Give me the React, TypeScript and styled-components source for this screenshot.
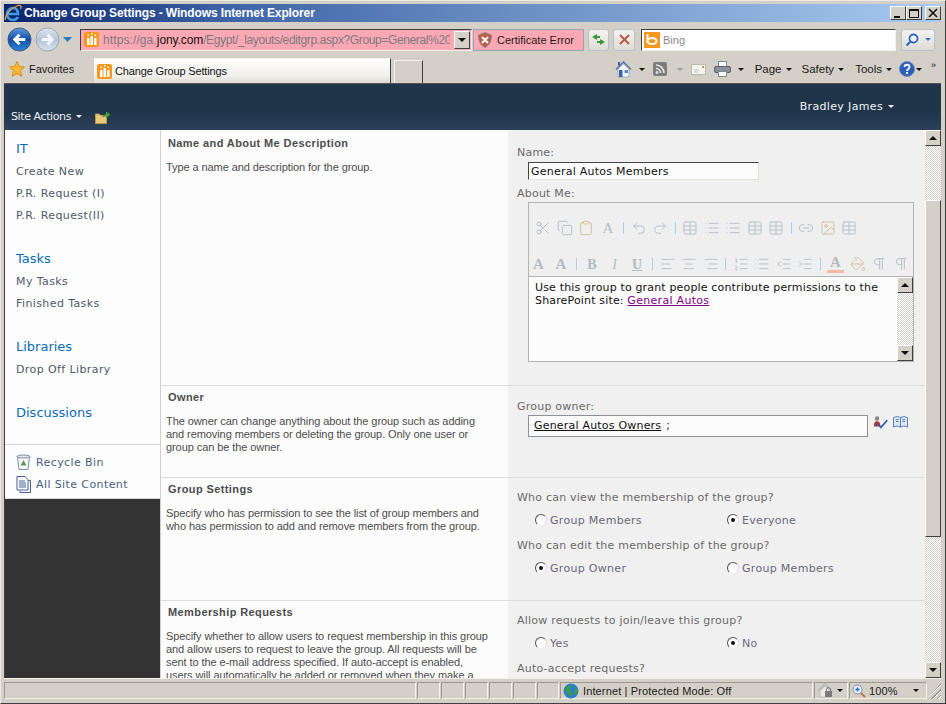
import styled, { createGlobalStyle } from 'styled-components'
import {
  Scissors, Copy, Clipboard, Undo2, Redo2, Table, Link2, Image, AlignLeft, AlignCenter, AlignRight,
  ListOrdered, List, Outdent, Indent, PaintBucket, Pilcrow,
} from 'lucide-react'

const GlobalStyle = createGlobalStyle`
  html, body { margin: 0; padding: 0; background: #d4d0c8; }
  body { font-family: "Liberation Sans", Arial, sans-serif; }
  * { box-sizing: border-box; }
`

const chromeFont = '"Liberation Sans", Arial, sans-serif'
const pageFont = '"DejaVu Sans", Verdana, sans-serif'

const Window = styled.div`
  width: 946px;
  height: 704px;
  padding: 3px 4px 2px 3px;
  display: flex;
  flex-direction: column;
  overflow: hidden;
  background: #d4d0c8;
  border-top: 1px solid #ece9e2;
  border-left: 1px solid #ece9e2;
  border-right: 1px solid #404040;
  border-bottom: 1px solid #404040;
`

const TitleBar = styled.div`
  height: 18px;
  flex: none;
  display: flex;
  align-items: center;
  gap: 2px;
  background: linear-gradient(90deg, #0a246a 0%, #3f66a8 25%, #6c8fc4 55%, #a6caf0 100%);
`

const TitleText = styled.span`
  flex: 1;
  color: #fff;
  font: bold 12px ${chromeFont};
  letter-spacing: -0.12px;
  white-space: nowrap;
`

const WinButtons = styled.div`
  display: flex;
  gap: 0;
`

const WinButton = styled.button<{ $gap?: number }>`
  width: 16px;
  height: 14px;
  padding: 0;
  margin-left: ${p => p.$gap ?? 0}px;
  display: flex;
  align-items: center;
  justify-content: center;
  background: #d4d0c8;
  border: 1px solid;
  border-color: #fff #404040 #404040 #fff;
`

const AddressRow = styled.div`
  height: 34px;
  flex: none;
  display: flex;
  align-items: center;
  padding: 1px 0 0 3px;
`

const NavGroup = styled.div`
  width: 73px;
  flex: none;
  display: flex;
  align-items: center;
  gap: 3px;
`

const AddressBox = styled.div`
  width: 392px;
  height: 22px;
  flex: none;
  display: flex;
  align-items: center;
  gap: 4px;
  padding-left: 3px;
  background: #ffa8b4;
  border: 1px solid;
  border-color: #404040 #f4f1ea #f4f1ea #404040;
  font: 12px ${chromeFont};
  overflow: hidden;
`

const Url = styled.span`
  flex: 1;
  width: 349px;
  overflow: hidden;
  white-space: nowrap;
  color: #7a7a80;
  letter-spacing: -0.37px;
  b { font-weight: normal; color: #111; letter-spacing: -0.1px; }
`

const UrlScheme = styled.span`
  letter-spacing: 0.1px;
`

const ComboButton = styled.span`
  width: 16px;
  height: 18px;
  margin-right: 1px;
  flex: none;
  display: flex;
  align-items: center;
  justify-content: center;
  background: #d4d0c8;
  border: 1px solid;
  border-color: #fff #404040 #404040 #fff;
`

const CertBox = styled.div`
  width: 111px;
  height: 22px;
  flex: none;
  margin-left: 1px;
  display: flex;
  align-items: center;
  gap: 5px;
  padding-left: 4px;
  background: #ffa8b4;
  border: 1px solid #9aa6b4;
  font: 11px ${chromeFont};
  color: #1a1a1a;
`

const RoundButton = styled.span<{ $gap?: number; $w?: number }>`
  width: ${p => p.$w ?? 21}px;
  height: 22px;
  flex: none;
  margin-left: ${p => p.$gap ?? 4}px;
  display: flex;
  align-items: center;
  justify-content: center;
  border: 1px solid #b9c0c8;
  border-radius: 3px;
  background: linear-gradient(#f4f3f0, #dfdcd6);
`

const SearchBox = styled.div`
  width: 255px;
  height: 22px;
  flex: none;
  margin-left: 6px;
  display: flex;
  align-items: center;
  gap: 3px;
  padding-left: 2px;
  background: #fff;
  border: 1px solid;
  border-color: #404040 #f4f1ea #f4f1ea #404040;
  font: 11px ${chromeFont};
  color: #8a8a8a;
`

const FavRow = styled.div`
  height: 27px;
  flex: none;
  display: flex;
  align-items: flex-end;
  padding-left: 5px;
`

const Favorites = styled.div`
  width: 85px;
  height: 27px;
  flex: none;
  display: flex;
  align-items: center;
  gap: 4px;
  padding-bottom: 1px;
  font: 11px ${chromeFont};
  color: #1a1a1a;
`

const ActiveTab = styled.div`
  width: 297px;
  height: 25px;
  flex: none;
  display: flex;
  align-items: center;
  gap: 3px;
  padding-left: 3px;
  background: linear-gradient(#fff, #f1efe9 70%, #dedbd3);
  border-right: 1px solid #404040;
  border-top: 1px solid #f2f0ea;
  font: 11px ${chromeFont};
  letter-spacing: -0.15px;
  color: #111;
`

const NewTab = styled.div`
  width: 29px;
  height: 23px;
  flex: none;
  margin-left: 3px;
  border-top: 1px solid #f4f1ea;
  border-left: 1px solid #f4f1ea;
  border-right: 1px solid #404040;
`

const CommandBar = styled.div`
  flex: 1;
  height: 27px;
  display: flex;
  align-items: center;
  justify-content: flex-end;
  padding: 0 5px 1px 0;
  font: 11.5px ${chromeFont};
  color: #1a1a1a;
`

const Command = styled.span<{ $gap?: number; $inner?: number }>`
  display: flex;
  align-items: center;
  gap: ${p => p.$inner ?? 4}px;
  margin-left: ${p => p.$gap ?? 12}px;
`

const Chevrons = styled.span`
  font-size: 9px;
  margin-top: -8px;
`

const Caret = styled.span<{ $color?: string }>`
  display: inline-block;
  width: 0;
  height: 0;
  border-left: 3px solid transparent;
  border-right: 3px solid transparent;
  border-top: 3px solid ${p => p.$color ?? '#111'};
`

const SiteHeader = styled.div`
  height: 47px;
  flex: none;
  display: flex;
  justify-content: space-between;
  padding: 15px 47px 0 7px;
  border-top: 1px solid #555;
  background: linear-gradient(#20344a 60%, #2c425a);
  color: #eef1f4;
  font: 11px ${pageFont};
`

const HeaderLeft = styled.div`
  display: flex;
  align-items: center;
  gap: 13px;
  margin-top: 8px;
  height: 18px;
`

const SiteActions = styled.span`
  display: flex;
  align-items: center;
  gap: 5px;
  letter-spacing: -0.4px;
`

const HeaderUser = styled.div`
  display: flex;
  align-items: center;
  gap: 5px;
  height: 14px;
  letter-spacing: 0.35px;
`

const Body = styled.div`
  height: 548px;
  flex: none;
  display: flex;
  overflow: hidden;
  border-left: 1px solid #404040;
`

const Nav = styled.nav`
  width: 156px;
  flex: none;
  display: flex;
  flex-direction: column;
  background: #333;
  border-right: 1px solid #d0d0d0;
`

const NavTop = styled.div`
  background: #fdfdfd;
  padding: 8px 11px 0;
  height: 315px;
  border-bottom: 1px solid #d8d8d8;
`

const NavHeading = styled.div<{ $mt?: number }>`
  margin-top: ${p => p.$mt ?? 0}px;
  margin-bottom: 1px;
  height: 22px;
  font: 13px/22px ${pageFont};
  color: #0a6cb4;
`

const NavItem = styled.div`
  height: 22px;
  font: 11px/22px ${pageFont};
  letter-spacing: 0.4px;
  color: #4f5a68;
  white-space: nowrap;
`

const NavBottom = styled.div`
  background: #fdfdfd;
  padding: 6px 11px 4px;
  height: 54px;
  border-bottom: 1px solid #d8d8d8;
`

const SideLink = styled.div`
  height: 22px;
  display: flex;
  align-items: center;
  gap: 5px;
  font: 11px ${pageFont};
  letter-spacing: 0.4px;
  color: #4a5f80;
`

const Main = styled.main`
  flex: 1;
  min-width: 0;
  overflow: hidden;
`

const Section = styled.section<{ $h: number }>`
  height: ${p => p.$h}px;
  display: flex;
  border-bottom: 1px solid #dcdcdc;
`

const Describe = styled.div<{ $pt?: number }>`
  width: 347px;
  flex: none;
  padding: ${p => p.$pt ?? 4}px 16px 0 5px;
  background: #fcfcfc;
`

const SectionTitle = styled.h3`
  margin: 0 0 11px 2px;
  font: bold 11px/14px ${chromeFont};
  color: #4c4c4c;
  letter-spacing: 0.4px;
`

const SectionText = styled.p`
  margin: 0;
  font: 11px/13px ${chromeFont};
  letter-spacing: -0.08px;
  color: #4c4c4c;
`

const Fields = styled.div<{ $pt?: number }>`
  flex: 1;
  padding: ${p => p.$pt ?? 13}px 9px 0;
  background: #f0f0f0;
`

const FieldLabel = styled.div<{ $mt?: number }>`
  margin-top: ${p => p.$mt ?? 0}px;
  font: 11px/14px ${pageFont};
  letter-spacing: 0.22px;
  color: #6a6a6a;
`

const NameInput = styled.div`
  width: 231px;
  height: 18px;
  margin: 2px 0 0 11px;
  padding-left: 2px;
  background: #fcfcfc;
  border: 1px solid;
  border-color: #444 #e6e2da #e6e2da #444;
  font: 11px/17px ${pageFont};
  letter-spacing: 0.24px;
  color: #111;
`

const Editor = styled.div`
  width: 386px;
  height: 160px;
  margin: 1px 0 0 11px;
  display: flex;
  flex-direction: column;
  border: 1px solid #b4b4b4;
`

const EditorTools = styled.div`
  height: 74px;
  flex: none;
  padding-top: 13px;
  background: #efefef;
  border-bottom: 1px solid #b4b4b4;
`

const ToolRow = styled.div<{ $pl?: number }>`
  height: 24px;
  margin-bottom: 12px;
  padding-left: ${p => p.$pl ?? 6}px;
  display: flex;
  align-items: center;
  gap: 5.500px;
`

const ToolGlyph = styled.span<{ $bold?: boolean; $italic?: boolean; $under?: boolean; $size?: number; $accent?: boolean }>`
  width: 17px;
  text-align: center;
  font: ${p => (p.$italic ? 'italic ' : '')}${p => (p.$bold ? 'bold ' : '')}${p => p.$size ?? 14}px/15px "Liberation Serif", serif;
  text-decoration: ${p => (p.$under ? 'underline' : 'none')};
  color: #b4bac0;
  ${p => (p.$accent ? 'border-bottom: 3px solid #f6b8a0;' : '')}
`

const ToolSep = styled.span`
  width: 1px;
  height: 12px;
  margin: 0 1px;
  flex: none;
  background: #a9cdeb;
`

const EditorBody = styled.div`
  flex: 1;
  display: flex;
  background: #fcfcfc;
`

const EditorText = styled.div`
  flex: 1;
  padding: 4px 6px;
  font: 11px/13px ${pageFont};
  letter-spacing: 0.16px;
  color: #111;
  a { color: #800080; text-decoration: underline; letter-spacing: 0.3px; }
`

const MiniBar = styled.div`
  width: 16px;
  flex: none;
  display: flex;
  flex-direction: column;
  justify-content: space-between;
  background: repeating-conic-gradient(#d4d0c8 0 25%, #fff 0 50%) 0 0 / 2px 2px;
`

const ScrollBtn = styled.div<{ $end?: boolean }>`
  width: 16px;
  height: 16px;
  flex: none;
  ${p => (p.$end ? 'margin-top: auto;' : '')}
  display: flex;
  align-items: center;
  justify-content: center;
  background: #d4d0c8;
  border: 1px solid;
  border-color: #fff #404040 #404040 #fff;
`

const Arrow = styled.span<{ $up?: boolean }>`
  width: 0;
  height: 0;
  border-left: 4px solid transparent;
  border-right: 4px solid transparent;
  ${p => (p.$up ? 'border-bottom: 4px solid #111;' : 'border-top: 4px solid #111;')}
`

const OwnerRow = styled.div`
  display: flex;
  align-items: flex-start;
  gap: 4px;
  margin: 1px 0 0 11px;
`

const OwnerInput = styled.div`
  width: 340px;
  height: 22px;
  padding-left: 5px;
  background: #fcfcfc;
  border: 1px solid #8c9198;
  font: 11px/20px ${pageFont};
  letter-spacing: 0.2px;
  color: #111;
  margin-right: 1px;
  u { margin-right: 5px; }
`

const RadioRow = styled.div`
  display: flex;
  margin: 9px 0 11px 18px;
`

const RadioItem = styled.label`
  width: 192px;
  display: flex;
  align-items: center;
  gap: 3px;
  font: 11px/14px ${pageFont};
  letter-spacing: 0.3px;
  color: #6a6a7a;
`

const RadioDot = styled.span<{ $on?: boolean }>`
  width: 12px;
  height: 12px;
  flex: none;
  margin-top: -2px;
  display: flex;
  align-items: center;
  justify-content: center;
  background: #fcfcfc;
  border-radius: 50%;
  border: 1px solid;
  border-color: #555 #ddd #eee #555;
  &::after {
    content: '';
    width: 4px;
    height: 4px;
    border-radius: 50%;
    background: ${p => (p.$on ? '#111' : 'transparent')};
  }
`

const Scrollbar = styled.div`
  width: 16px;
  flex: none;
  display: flex;
  flex-direction: column;
  background: repeating-conic-gradient(#d4d0c8 0 25%, #fff 0 50%) 0 0 / 2px 2px;
`

const Thumb = styled.div`
  height: 337px;
  flex: none;
  margin-top: 54px;
  background: #d4d0c8;
  border: 1px solid;
  border-color: #fff #404040 #404040 #fff;
`

const StatusBar = styled.div`
  height: 23px;
  flex: none;
  display: flex;
  align-items: stretch;
  padding: 3px 0 2px;
  border-top: 1px solid #f4f1ea;
  font: 11px ${chromeFont};
  letter-spacing: 0.13px;
  color: #1a1a1a;
`

const StatusCell = styled.div<{ $w?: number; $grow?: boolean; $gap?: number }>`
  ${p => (p.$grow ? 'flex: 1;' : `width: ${p.$w}px; flex: none;`)}
  display: flex;
  align-items: center;
  gap: ${p => p.$gap ?? 4}px;
  padding-left: 2px;
  margin-right: 1px;
  border: 1px solid;
  border-color: #9c9890 #f4f1ea #f4f1ea #9c9890;
`

const ZoomCaret = styled(Caret)`
  margin-left: 12px;
`

const Grip = styled.span`
  width: 13px;
  flex: none;
  background: repeating-linear-gradient(135deg, transparent 0 2px, #9c9890 2px 3px, #fff 3px 4px);
  clip-path: polygon(100% 0, 100% 100%, 0 100%);
`

const IeLogo = () => (
  <svg width="18" height="18" viewBox="0 0 18 18" fill="none">
    <path d="M4.500 10h9.500c.3-3.500-2-6-5-6S3 6.500 3 10s2.500 6 5.800 6c2.400 0 4.200-1.100 5-3" stroke="#3f9be6" strokeWidth="2.600" />
    <path d="M1.500 16C.2 12 6 4.500 14 1.500c2.800-.8 3.600.8 2.600 3.500" stroke="#f0a030" strokeWidth="1.300" />
  </svg>
)

const SiteIcon = () => (
  <svg width="15" height="15" viewBox="0 0 15 15">
    <rect width="15" height="15" rx="2" fill="#f7981d" />
    <rect x="3" y="6" width="2.500" height="7" fill="#fff" />
    <rect x="6.500" y="4" width="2.500" height="9" fill="#fff" />
    <rect x="10" y="6" width="2.500" height="7" fill="#fff" />
    <rect x="3.500" y="2.500" width="1.500" height="1.500" fill="#fff" />
    <rect x="7" y="1" width="1.500" height="1.500" fill="#fff" />
    <rect x="10.500" y="2.500" width="1.500" height="1.500" fill="#fff" />
  </svg>
)

const BackIcon = ({ dim }: { dim?: boolean }) => (
  <svg width="25" height="25" viewBox="0 0 26 26">
    <defs>
      <linearGradient id={dim ? 'fwd' : 'bck'} x1="0" y1="0" x2="0" y2="1">
        <stop offset="0" stopColor={dim ? '#dfe8f2' : '#5c9be0'} />
        <stop offset="0.5" stopColor={dim ? '#b4c4d8' : '#0f4ea8'} />
        <stop offset="1" stopColor={dim ? '#d8e2ee' : '#2e86dc'} />
      </linearGradient>
    </defs>
    <circle cx="13" cy="13" r="12" fill={`url(#${dim ? 'fwd' : 'bck'})`} stroke={dim ? '#9aa4ae' : '#4a5a70'} />
    {dim ? (
      <path d="M7 13h11M13 8l5 5-5 5" fill="none" stroke="#f4f7fb" strokeWidth="3" />
    ) : (
      <path d="M19 13H8M13 8l-5 5 5 5" fill="none" stroke="#fff" strokeWidth="3" />
    )}
  </svg>
)

const GlobeIcon = () => (
  <svg width="16" height="16" viewBox="0 0 16 16">
    <circle cx="8" cy="8" r="7.500" fill="#2c7fd0" />
    <path d="M3 4c2-1 4-2 6-1 0 2-2 2-2 4s2 2 2 4l-2 3C5 13 5 10 3 9 2 7 2 5 3 4zM11 6l3 0 1 3-2 3-2-2z" fill="#3f9a4a" />
  </svg>
)

const HomeIcon = () => (
  <svg width="17" height="17" viewBox="0 0 17 17">
    <path d="M1 8.500 8.500 1l7.500 7.500" fill="none" stroke="#5878a8" strokeWidth="1.500" />
    <path d="M3 8l5.500-5L14 8v8H3z" fill="#f4f6fa" stroke="#8096b8" strokeWidth=".7" />
    <rect x="4" y="9" width="3.500" height="7" fill="#3a62a8" />
    <rect x="9.500" y="9" width="3.500" height="3" fill="#5a88d0" />
    <rect x="3" y="1" width="2" height="3.500" fill="#3a62a8" />
  </svg>
)

const LockedHome = () => (
  <svg width="17" height="15" viewBox="0 0 17 15">
    <path d="M1 8 8 1l7 7" fill="none" stroke="#b8b8b8" strokeWidth="1.500" />
    <path d="M3 8l5-5 5 5v6H3z" fill="#ecebe8" stroke="#b0b0b0" strokeWidth=".7" />
    <rect x="8" y="8" width="7" height="6" fill="#7c7c7c" />
    <path d="M9.500 8V6.500a2 2 0 0 1 4 0V8" fill="none" stroke="#7c7c7c" />
  </svg>
)

const ZoomIcon = () => (
  <svg width="14" height="14" viewBox="0 0 14 14">
    <circle cx="5.500" cy="5.500" r="4.500" fill="#e4f0fb" stroke="#7a90a8" />
    <path d="M3.500 5.500h4M5.500 3.500v4" stroke="#2a68c0" strokeWidth="1.300" />
    <path d="M9 9l4 4" stroke="#b87848" strokeWidth="2" />
  </svg>
)

const FeedIcon = () => (
  <svg width="14" height="14" viewBox="0 0 14 14">
    <rect width="14" height="14" rx="2" fill="#7d7d7d" />
    <circle cx="4" cy="10.500" r="1.400" fill="#e4e4e4" />
    <path d="M3 6.500a4.500 4.500 0 0 1 4.500 4.500M3 3a8 8 0 0 1 8 8" fill="none" stroke="#e4e4e4" strokeWidth="1.600" />
  </svg>
)

const MailIcon = () => (
  <svg width="15" height="11" viewBox="0 0 15 11">
    <rect x=".5" y=".5" width="14" height="10" fill="#f6f4ef" stroke="#bdb9b0" />
    <path d="M3 6h5M3 8h4" stroke="#c4c0b8" />
    <rect x="11" y="2" width="2" height="2" fill="#e08050" />
  </svg>
)

const PrintIcon = () => (
  <svg width="17" height="16" viewBox="0 0 17 16">
    <rect x="4.500" y=".5" width="8" height="6" fill="#fff" stroke="#808890" />
    <rect x=".5" y="5.500" width="16" height="6" rx="1.500" fill="#8a9098" stroke="#5c6268" />
    <rect x="4.500" y="10.500" width="8" height="5" fill="#fff" stroke="#808890" />
  </svg>
)

const HelpIcon = () => (
  <svg width="16" height="16" viewBox="0 0 16 16">
    <circle cx="8" cy="8" r="7.500" fill="#2a5cc0" stroke="#7b8aa8" />
    <path d="M5.500 6c0-3 5-3 5 0 0 2-2.500 2-2.500 4" fill="none" stroke="#fff" strokeWidth="1.800" />
    <rect x="7" y="11" width="2" height="2" fill="#fff" />
  </svg>
)

const Bing = () => (
  <svg width="16" height="16" viewBox="0 0 16 16">
    <rect width="16" height="16" fill="#f7981d" />
    <path d="M3.500 2v9" stroke="#fff" strokeWidth="2" />
    <ellipse cx="8" cy="9" rx="4.500" ry="3" fill="none" stroke="#fff" strokeWidth="2" />
  </svg>
)

const ShieldIcon = () => (
  <svg width="14" height="16" viewBox="0 0 14 16">
    <path d="M7 .5 13.500 3c0 6-1.500 10-6.500 12.500C2 13 .5 9 .5 3z" fill="#b8604a" stroke="#8a8a8a" />
    <path d="M4 5l6 6M10 5l-6 6" stroke="#fff" strokeWidth="1.800" />
  </svg>
)

const Star = () => (
  <svg width="16" height="16" viewBox="0 0 16 16">
    <path d="M8 .5 10.200 5.500 15.500 6 11.500 9.700 12.800 15.300 8 12.400 3.200 15.300 4.500 9.700.5 6 5.800 5.500z" fill="#f7b733" stroke="#d98a1e" />
  </svg>
)

const FolderUp = () => (
  <svg width="16" height="15" viewBox="0 0 16 15">
    <path d="M.5 5h4l1 1.500h6v8h-11z" fill="#e8c878" stroke="#b89850" />
    <path d="M7 9c1-3 3-4 4-4V2.500L15.500 5.500 11 9V7.500C9.500 7.500 8 8 7 9z" fill="#4a9a3a" />
  </svg>
)

const RecycleIcon = () => (
  <svg width="15" height="16" viewBox="0 0 15 16">
    <path d="M1.500 2.500h12l-1.500 13h-9z" fill="#f4f6fa" stroke="#7f8ea8" />
    <ellipse cx="7.500" cy="2.500" rx="6.500" ry="1.500" fill="#e2e6ee" stroke="#7f8ea8" />
    <path d="M7.500 6 10.500 11.500h-6z" fill="#5f9a5a" />
  </svg>
)

const PagesIcon = () => (
  <svg width="15" height="17" viewBox="0 0 15 17">
    <path d="M1 .5h8l3 3V14H1z" fill="#fff" stroke="#44609a" />
    <path d="M3 5h6M3 7h7M3 9h7M3 11h7" stroke="#44609a" />
    <path d="M12.500 4.500h2V16.500H4v-2" fill="none" stroke="#44609a" />
  </svg>
)

const CheckNames = () => (
  <svg width="16" height="15" viewBox="0 0 18 15">
    <circle cx="4.500" cy="3" r="2.500" fill="#888" />
    <path d="M1 12c0-4 1-6 3.500-6S8 8 8 10v2z" fill="#a33a3a" />
    <path d="M6 9.500 9 13l7-8" fill="none" stroke="#2f5fa8" strokeWidth="2" />
  </svg>
)

const BookIcon = () => (
  <svg width="15" height="13" viewBox="0 0 16 13">
    <path d="M.5 2.500C3 1 6 1 8 2.500 10 1 13 1 15.500 2.500v10C13 11 10 11 8 12.500 6 11 3 11 .5 12.500z" fill="#dfeaf6" stroke="#4a78b0" />
    <path d="M8 2.500v10M3 4.500h3M3 6.500h3M10 4.500h3M10 6.500h3" stroke="#4a78b0" />
  </svg>
)

const tool = { size: 16, strokeWidth: 1.500, color: '#b9c1ca' }
const warmTool = { size: 16, strokeWidth: 1.500, color: '#d2c39c' }

const App = () => (
  <>
    <GlobalStyle />
    <Window>
      <TitleBar>
        <IeLogo />
        <TitleText>Change Group Settings - Windows Internet Explorer</TitleText>
        <WinButtons>
          <WinButton>
            <svg width="10" height="10"><rect x="1" y="8" width="6" height="2" fill="#111" /></svg>
          </WinButton>
          <WinButton>
            <svg width="10" height="10"><path d="M.5 1.500h9v8h-9z" fill="none" stroke="#111" /><rect y="1" width="10" height="2" fill="#111" /></svg>
          </WinButton>
          <WinButton $gap={3}>
            <svg width="10" height="10"><path d="M1 1l8 8M9 1l-8 8" stroke="#111" strokeWidth="1.600" /></svg>
          </WinButton>
        </WinButtons>
      </TitleBar>

      <AddressRow>
        <NavGroup>
          <BackIcon />
          <BackIcon dim />
          <svg width="9" height="6"><path d="M0 0h9L4.500 5z" fill="#2a78c8" /></svg>
        </NavGroup>
        <AddressBox>
          <SiteIcon />
          <Url><UrlScheme>https://ga.</UrlScheme><b>jony.com</b>/Egypt/_layouts/editgrp.aspx?Group=General%20Autos%20Members</Url>
          <ComboButton><Arrow /></ComboButton>
        </AddressBox>
        <CertBox><ShieldIcon />Certificate Error</CertBox>
        <RoundButton>
          <svg width="15" height="13" viewBox="0 0 15 13"><path d="M6 1 1 4l5 3V5h3V3H6zM9 6l5 3-5 3v-2H6V8h3z" fill="#3a9a3a" /></svg>
        </RoundButton>
        <RoundButton $w={22}>
          <svg width="11" height="11"><path d="M1 1l9 9M10 1l-9 9" stroke="#b85a44" strokeWidth="2" /></svg>
        </RoundButton>
        <SearchBox><Bing />Bing</SearchBox>
        <RoundButton $gap={5} $w={34}>
          <svg width="14" height="14" viewBox="0 0 14 14" style={{ marginRight: 6 }}><circle cx="8.500" cy="5.500" r="4" fill="#f4f8fd" stroke="#2a68c0" strokeWidth="1.800" /><path d="M5.500 8.500 1.500 12.500" stroke="#2a68c0" strokeWidth="2.200" /></svg>
          <Caret $color="#2a78c8" />
        </RoundButton>
      </AddressRow>

      <FavRow>
        <Favorites><Star />Favorites</Favorites>
        <ActiveTab><SiteIcon />Change Group Settings</ActiveTab>
        <NewTab />
        <CommandBar>
          <Command $inner={7}><HomeIcon /><Caret /></Command>
          <Command $gap={8} $inner={10}><FeedIcon /><Caret $color="#999" /></Command>
          <Command $gap={8}><MailIcon /></Command>
          <Command $gap={8} $inner={7}><PrintIcon /><Caret /></Command>
          <Command $gap={11}>Page<Caret /></Command>
          <Command $gap={10}>Safety<Caret /></Command>
          <Command $gap={11}>Tools<Caret /></Command>
          <Command $gap={7} $inner={1}><HelpIcon /><Caret /></Command>
          <Command $gap={9}><Chevrons>»</Chevrons></Command>
        </CommandBar>
      </FavRow>

      <SiteHeader>
        <HeaderLeft>
          <SiteActions>Site Actions<Caret $color="#eef1f4" /></SiteActions>
          <FolderUp />
        </HeaderLeft>
        <HeaderUser>Bradley James<Caret $color="#eef1f4" /></HeaderUser>
      </SiteHeader>

      <Body>
        <Nav>
          <NavTop>
            <NavHeading>IT</NavHeading>
            <NavItem>Create New</NavItem>
            <NavItem>P.R. Request (I)</NavItem>
            <NavItem>P.R. Request(II)</NavItem>
            <NavHeading $mt={21}>Tasks</NavHeading>
            <NavItem>My Tasks</NavItem>
            <NavItem>Finished Tasks</NavItem>
            <NavHeading $mt={21}>Libraries</NavHeading>
            <NavItem>Drop Off Library</NavItem>
            <NavHeading $mt={21}>Discussions</NavHeading>
          </NavTop>
          <NavBottom>
            <SideLink><RecycleIcon />Recycle Bin</SideLink>
            <SideLink><PagesIcon />All Site Content</SideLink>
          </NavBottom>
        </Nav>

        <Main>
          <Section $h={256}>
            <Describe $pt={6}>
              <SectionTitle>Name and About Me Description</SectionTitle>
              <SectionText>Type a name and description for the group.</SectionText>
            </Describe>
            <Fields $pt={16}>
              <FieldLabel>Name:</FieldLabel>
              <NameInput>General Autos Members</NameInput>
              <FieldLabel $mt={7}>About Me:</FieldLabel>
              <Editor>
                <EditorTools>
                  <ToolRow>
                    <Scissors {...tool} />
                    <Copy {...tool} />
                    <Clipboard {...warmTool} />
                    <ToolGlyph $size={15}>A</ToolGlyph>
                    <ToolSep />
                    <Undo2 {...tool} />
                    <Redo2 {...tool} />
                    <ToolSep />
                    <Table {...tool} />
                    <List {...tool} />
                    <List {...tool} />
                    <Table {...tool} />
                    <Table {...tool} />
                    <ToolSep />
                    <Link2 {...tool} />
                    <Image {...warmTool} />
                    <Table {...tool} />
                  </ToolRow>
                  <ToolRow $pl={1}>
                    <ToolGlyph $bold $size={15}>A</ToolGlyph>
                    <ToolGlyph $bold $size={15}>A</ToolGlyph>
                    <ToolSep />
                    <ToolGlyph $bold>B</ToolGlyph>
                    <ToolGlyph $italic>I</ToolGlyph>
                    <ToolGlyph $bold $under>U</ToolGlyph>
                    <ToolSep />
                    <AlignLeft {...tool} />
                    <AlignCenter {...tool} />
                    <AlignRight {...tool} />
                    <ToolSep />
                    <ListOrdered {...tool} />
                    <List {...tool} />
                    <Outdent {...tool} />
                    <Indent {...tool} />
                    <ToolSep />
                    <ToolGlyph $bold $size={15} $accent>A</ToolGlyph>
                    <PaintBucket {...warmTool} />
                    <Pilcrow {...tool} />
                    <Pilcrow {...tool} />
                  </ToolRow>
                </EditorTools>
                <EditorBody>
                  <EditorText>
                    Use this group to grant people contribute permissions to the SharePoint site: <a href="#g">General Autos</a>
                  </EditorText>
                  <MiniBar>
                    <ScrollBtn><Arrow $up /></ScrollBtn>
                    <ScrollBtn><Arrow /></ScrollBtn>
                  </MiniBar>
                </EditorBody>
              </Editor>
            </Fields>
          </Section>

          <Section $h={92}>
            <Describe>
              <SectionTitle>Owner</SectionTitle>
              <SectionText>The owner can change anything about the group such as adding and removing members or deleting the group. Only one user or group can be the owner.</SectionText>
            </Describe>
            <Fields>
              <FieldLabel $mt={1}>Group owner:</FieldLabel>
              <OwnerRow>
                <OwnerInput><u>General Autos Owners</u>;</OwnerInput>
                <CheckNames />
                <BookIcon />
              </OwnerRow>
            </Fields>
          </Section>

          <Section $h={123}>
            <Describe>
              <SectionTitle>Group Settings</SectionTitle>
              <SectionText>Specify who has permission to see the list of group members and who has permission to add and remove members from the group.</SectionText>
            </Describe>
            <Fields>
              <FieldLabel>Who can view the membership of the group?</FieldLabel>
              <RadioRow>
                <RadioItem><RadioDot />Group Members</RadioItem>
                <RadioItem><RadioDot $on />Everyone</RadioItem>
              </RadioRow>
              <FieldLabel>Who can edit the membership of the group?</FieldLabel>
              <RadioRow>
                <RadioItem><RadioDot $on />Group Owner</RadioItem>
                <RadioItem><RadioDot />Group Members</RadioItem>
              </RadioRow>
            </Fields>
          </Section>

          <Section $h={200}>
            <Describe>
              <SectionTitle>Membership Requests</SectionTitle>
              <SectionText>Specify whether to allow users to request membership in this group and allow users to request to leave the group. All requests will be sent to the e-mail address specified. If auto-accept is enabled, users will automatically be added or removed when they make a request.</SectionText>
            </Describe>
            <Fields>
              <FieldLabel>Allow requests to join/leave this group?</FieldLabel>
              <RadioRow>
                <RadioItem><RadioDot />Yes</RadioItem>
                <RadioItem><RadioDot $on />No</RadioItem>
              </RadioRow>
              <FieldLabel>Auto-accept requests?</FieldLabel>
            </Fields>
          </Section>
        </Main>

        <Scrollbar>
          <ScrollBtn><Arrow $up /></ScrollBtn>
          <Thumb />
          <ScrollBtn $end><Arrow /></ScrollBtn>
        </Scrollbar>
      </Body>

      <StatusBar>
        <StatusCell $grow />
        <StatusCell $w={23} />
        <StatusCell $w={23} />
        <StatusCell $w={23} />
        <StatusCell $w={23} />
        <StatusCell $w={23} />
        <StatusCell $w={22} />
        <StatusCell $w={253}><GlobeIcon />Internet | Protected Mode: Off</StatusCell>
        <StatusCell $w={34} $gap={3}><LockedHome /><Caret /></StatusCell>
        <StatusCell $w={78} $gap={3}><ZoomIcon />100%<ZoomCaret /></StatusCell>
        <Grip />
      </StatusBar>
    </Window>
  </>
)

export default App
